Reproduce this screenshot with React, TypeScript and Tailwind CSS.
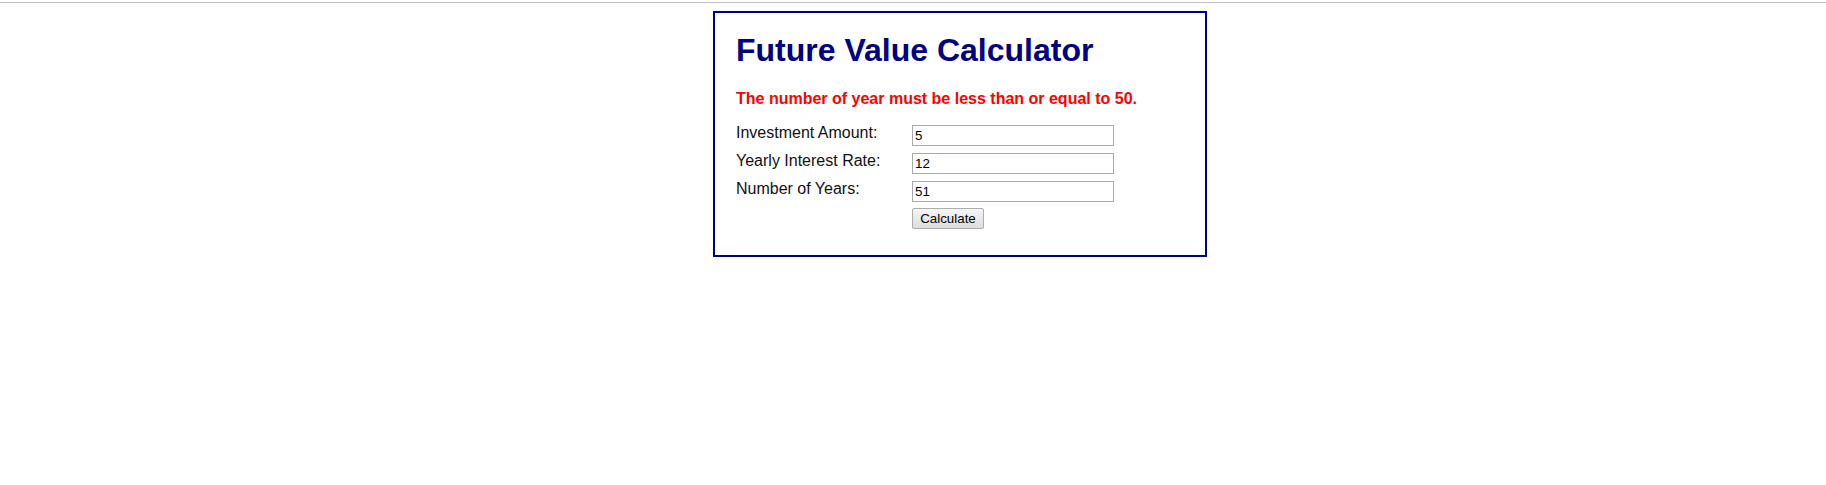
import React from 'react';

const rows = [
  { label: 'Investment Amount:', value: '5' },
  { label: 'Yearly Interest Rate:', value: '12' },
  { label: 'Number of Years:', value: '51' },
];

export default function App() {
  return (
    <div className="min-h-[485px] bg-white font-['Liberation_Sans',Arial,sans-serif] text-black">
      <div className="h-[3px] border-b border-[#c4c4c4]" />
      <div className="ml-[713px] mt-[8px] w-[494px] border-2 border-[#000080] px-[21px] pt-[19px] pb-[26px]">
        <h1 className="text-[32px] leading-[36px] font-bold text-[#000080]">Future Value Calculator</h1>
        <p className="mt-[22px] text-[16px] leading-[18px] font-bold text-[#ff0000]">
          The number of year must be less than or equal to 50.
        </p>

        <div className="mt-[16px] flex flex-col gap-[6px]">
          {rows.map((row) => (
            <div key={row.label} className="flex items-start">
              <label className="w-[176px] shrink-0 text-[16px] leading-[18px] text-[#111]">{row.label}</label>
              <input
                type="text"
                defaultValue={row.value}
                className="mt-[1px] h-[21px] w-[202px] border border-[#a9a9a9] bg-white px-[2px] text-[13.33px] leading-[17px] text-black outline-none"
              />
            </div>
          ))}
          <div className="flex">
            <div className="w-[176px] shrink-0" />
            <button
              type="button"
              className="h-[21px] w-[72px] rounded-[2px] border border-[#adadad] bg-gradient-to-b from-[#f6f6f6] to-[#dddddd] text-[13.33px] leading-[17px] text-black"
            >
              Calculate
            </button>
          </div>
        </div>
      </div>
    </div>
  );
}
